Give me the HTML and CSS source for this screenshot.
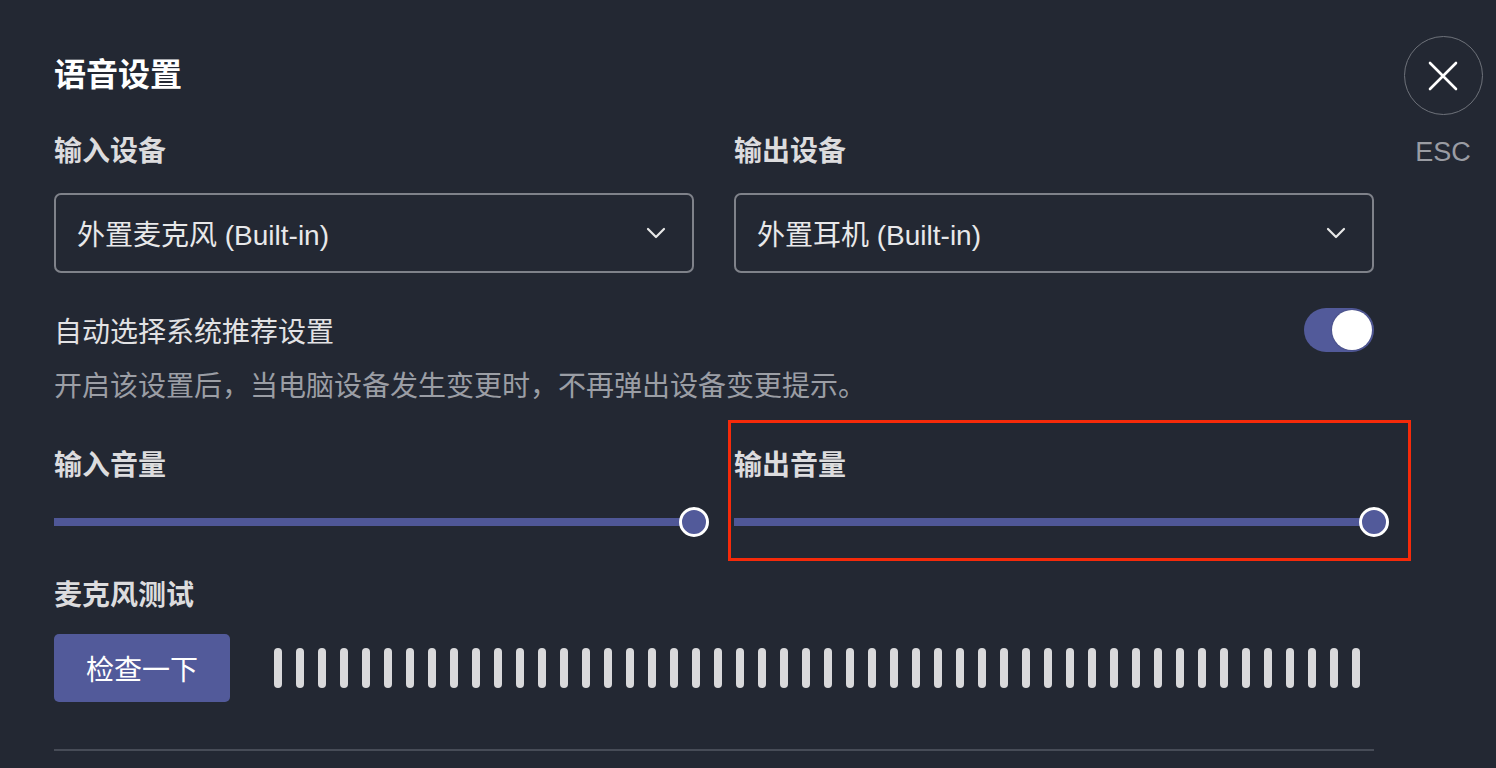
FILE: index.html
```html
<!DOCTYPE html>
<html lang="zh-CN">
<head>
<meta charset="UTF-8">
<meta name="viewport" content="width=device-width, initial-scale=1.0">
<title>语音设置</title>
<link rel="stylesheet" href="styles.css">
</head>
<body>
    <div class="dialog">
        <h2 class="title">语音设置</h2>

        <div class="row two-col">
            <div class="field">
                <div class="label">输入设备</div>
                <div class="select">
                    <span>外置麦克风 (Built-in)</span>
                    <svg class="chevron" width="20" height="12" viewBox="0 0 20 12"><path d="M2 2 L10 10 L18 2" fill="none" stroke="#e8e8e8" stroke-width="2.2" stroke-linecap="round" stroke-linejoin="round"/></svg>
                </div>
            </div>
            <div class="field">
                <div class="label">输出设备</div>
                <div class="select">
                    <span>外置耳机 (Built-in)</span>
                    <svg class="chevron" width="20" height="12" viewBox="0 0 20 12"><path d="M2 2 L10 10 L18 2" fill="none" stroke="#e8e8e8" stroke-width="2.2" stroke-linecap="round" stroke-linejoin="round"/></svg>
                </div>
            </div>
        </div>

        <div class="toggle-row">
            <span>自动选择系统推荐设置</span>
            <div class="toggle"><div class="knob"></div></div>
        </div>
        <p class="desc">开启该设置后，当电脑设备发生变更时，不再弹出设备变更提示。</p>

        <div class="row two-col volumes">
            <div class="field">
                <div class="label">输入音量</div>
                <div class="slider"><div class="thumb"></div></div>
            </div>
            <div class="field">
                <div class="label">输出音量</div>
                <div class="slider"><div class="thumb"></div></div>
            </div>
        </div>

        <div class="label mic-label">麦克风测试</div>
        <div class="mic-row">
            <button class="check-btn">检查一下</button>
            <div class="meter">
                <span></span><span></span><span></span><span></span><span></span>
                <span></span><span></span><span></span><span></span><span></span>
                <span></span><span></span><span></span><span></span><span></span>
                <span></span><span></span><span></span><span></span><span></span>
                <span></span><span></span><span></span><span></span><span></span>
                <span></span><span></span><span></span><span></span><span></span>
                <span></span><span></span><span></span><span></span><span></span>
                <span></span><span></span><span></span><span></span><span></span>
                <span></span><span></span><span></span><span></span><span></span>
                <span></span><span></span><span></span><span></span><span></span>
            </div>
        </div>

        <div class="divider"></div>

        <div class="close">
            <div class="close-circle">
                <svg width="32" height="32" viewBox="0 0 32 32"><path d="M3 3 L29 29 M29 3 L3 29" stroke="#ffffff" stroke-width="2.6" stroke-linecap="round"/></svg>
            </div>
            <div class="esc">ESC</div>
        </div>

        <div class="highlight"></div>
    </div>
</body>
</html>
```

FILE: styles.css
```css
html, body {
    margin: 0;
    background-color: #232833;
    overflow: hidden;
}
body {
    font-family: "Liberation Sans", "Noto Sans CJK SC", sans-serif;
    color: #e0e0e2;
}
.dialog {
    position: relative;
    width: 1320px;
    padding: 55px 0 0 54px;
    height: 713px;
}
.title {
    margin: 0;
    font-size: 32px;
    line-height: 40px;
    font-weight: bold;
    color: #ffffff;
}
.row {
    display: flex;
    gap: 40px;
}
.two-col {
    margin-top: 37px;
}
.field {
    width: 640px;
}
.label {
    font-size: 28px;
    line-height: 40px;
    font-weight: bold;
    color: #dcdcde;
}
.select {
    margin-top: 21px;
    height: 76px;
    border: 2px solid #7f828a;
    border-radius: 7px;
    display: flex;
    align-items: center;
    justify-content: space-between;
    padding: 0 26px 0 21px;
    font-size: 28px;
    color: #e8e8ea;
}
.chevron {
    display: block;
}
.toggle-row {
    margin-top: 35px;
    display: flex;
    align-items: center;
    justify-content: space-between;
    font-size: 28px;
    color: #e2e2e4;
    height: 44px;
}
.toggle {
    width: 70px;
    height: 44px;
    border-radius: 22px;
    background-color: #525a9a;
    display: flex;
    align-items: center;
    justify-content: flex-end;
    padding: 0 2px;
    box-sizing: border-box;
}
.knob {
    width: 40px;
    height: 40px;
    border-radius: 50%;
    background-color: #ffffff;
    box-shadow: 0 0 2px rgba(0, 0, 0, 0.3);
}
.desc {
    margin: 15px 0 0;
    font-size: 28px;
    line-height: 40px;
    color: #9b9ea5;
}
.volumes {
    margin-top: 39px;
}
.slider {
    position: relative;
    margin-top: 21px;
    height: 30px;
    display: flex;
    align-items: center;
}
.slider::before {
    content: "";
    display: block;
    width: 100%;
    height: 8px;
    background-color: #4f5797;
}
.thumb {
    position: absolute;
    right: -15px;
    top: 0;
    width: 24px;
    height: 24px;
    border: 3px solid #ffffff;
    border-radius: 50%;
    background-color: #525a9a;
}
.mic-label {
    margin-top: 39px;
}
.mic-row {
    margin-top: 18px;
    display: flex;
    align-items: center;
    gap: 44px;
}
.check-btn {
    width: 176px;
    height: 68px;
    border: none;
    border-radius: 5px;
    background-color: #525a9a;
    color: #ffffff;
    font-family: "Liberation Sans", "Noto Sans CJK SC", sans-serif;
    font-size: 28px;
    cursor: pointer;
}
.meter {
    display: flex;
    gap: 14px;
}
.meter span {
    width: 8px;
    height: 40px;
    border-radius: 4px;
    background-color: #d9d9db;
}
.divider {
    margin-top: 47px;
    height: 2px;
    background-color: #474c57;
}
.close {
    position: absolute;
    top: 36px;
    right: -109px;
    display: flex;
    flex-direction: column;
    align-items: center;
    width: 80px;
}
.close-circle {
    width: 77px;
    height: 77px;
    border: 1.5px solid #6e727a;
    border-radius: 50%;
    display: flex;
    align-items: center;
    justify-content: center;
}
.esc {
    margin-top: 21px;
    font-size: 27px;
    line-height: 32px;
    color: #9a9ca3;
}
.highlight {
    position: absolute;
    left: 728px;
    top: 420px;
    width: 677px;
    height: 135px;
    border: 3px solid #f52a0a;
}
```
